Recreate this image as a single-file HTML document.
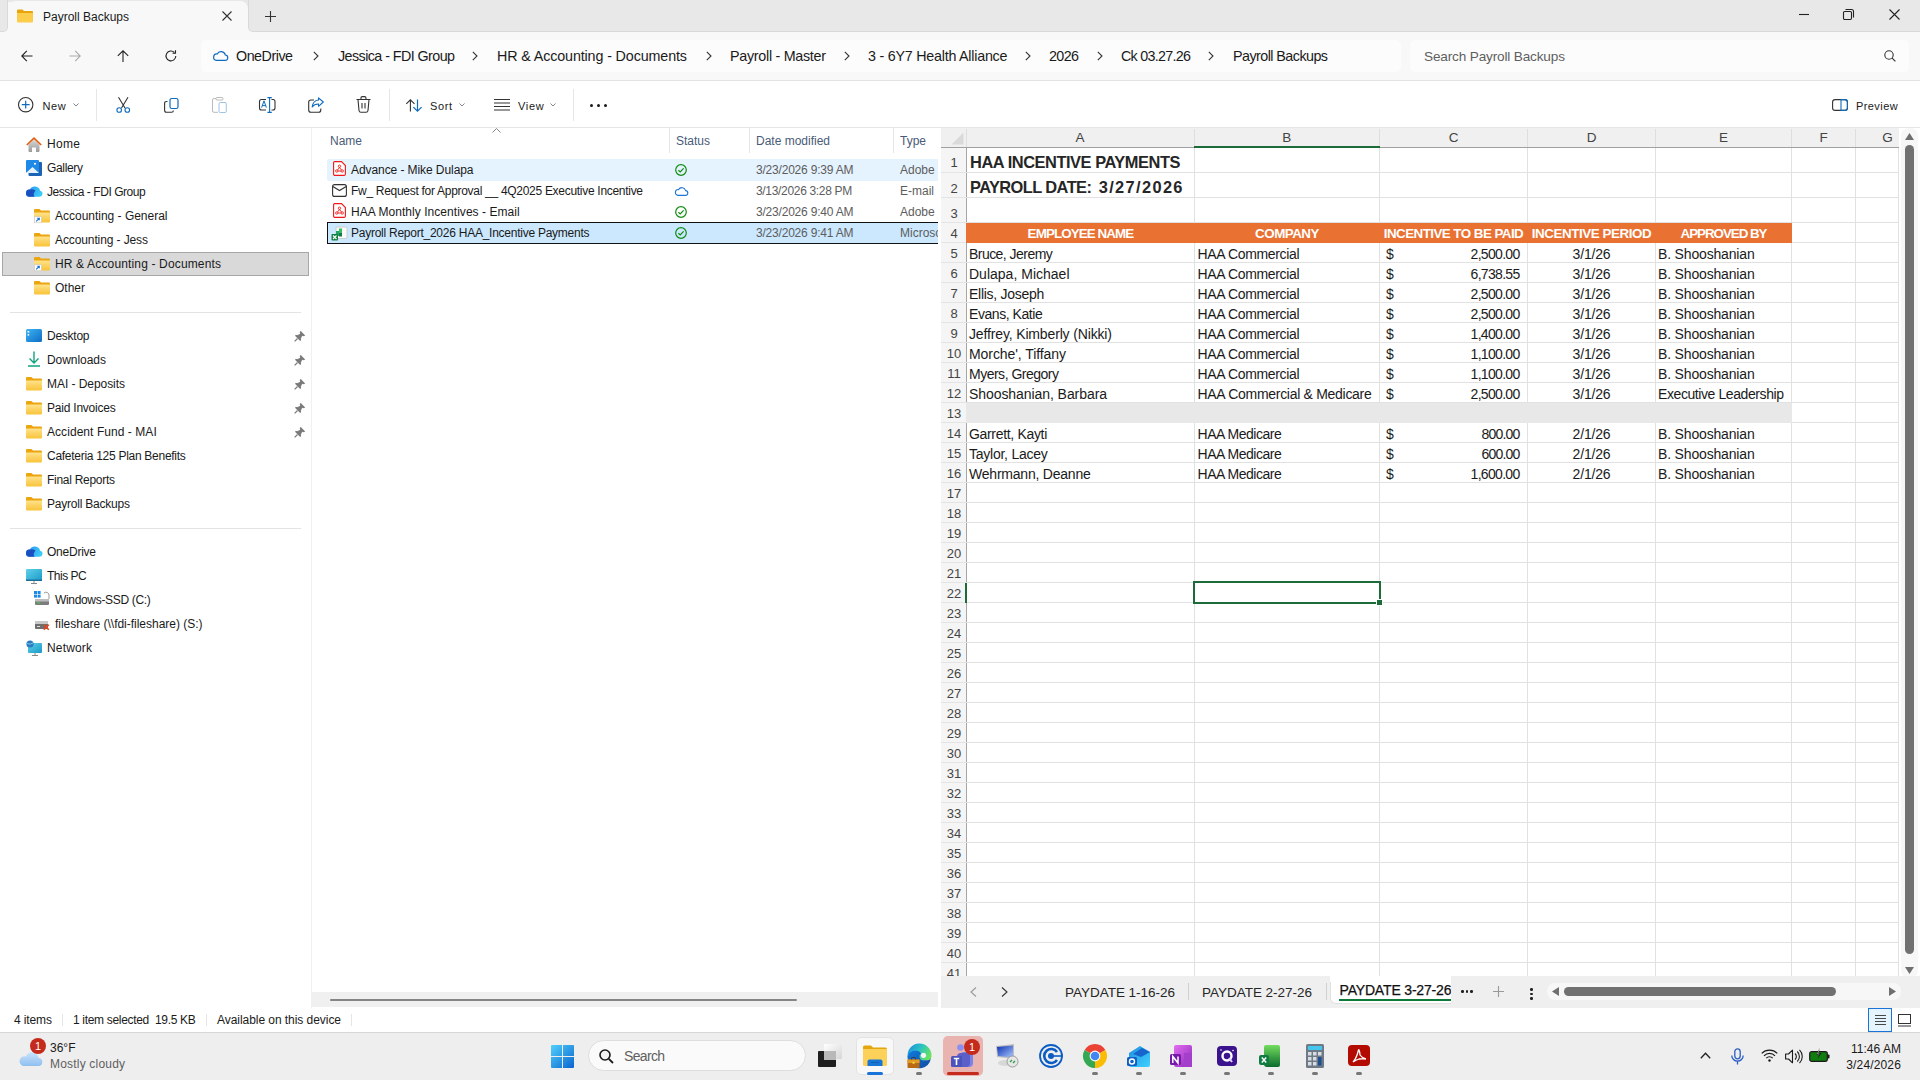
<!DOCTYPE html>
<html><head><meta charset="utf-8">
<style>
*{margin:0;padding:0;box-sizing:border-box}
html,body{width:1920px;height:1080px;overflow:hidden;background:#fff;font-family:"Liberation Sans",sans-serif;color:#1a1a1a}
.a{position:absolute}
.t{position:absolute;white-space:nowrap;line-height:20px;font-size:12px}
svg{position:absolute;overflow:visible}
</style></head><body>

<!-- TITLE BAR -->
<div class="a" style="left:0;top:0;width:1920px;height:80px;background:#f8f8f8"></div>
<div class="a" style="left:0;top:0;width:1920px;height:2px;background:#e8e8e8"></div>
<div class="a" style="left:0;top:0;width:8px;height:10px;background:#e8e8e8"></div>
<div class="a" style="left:240px;top:0;width:12px;height:10px;background:#e8e8e8"></div>
<div class="a" style="left:8px;top:1px;width:240px;height:30px;background:#f8f8f8;border-radius:8px 8px 0 0"></div>
<div class="a" style="left:-1px;top:-1px;width:9px;height:32.5px;background:#e8e8e8;border-radius:0 0 5px 0;border:1px solid #d9d9d9;border-top:none;border-left:none"></div>
<div class="a" style="left:248px;top:-1px;width:1673px;height:32.5px;background:#e8e8e8;border-radius:0 0 0 5px;border:1px solid #d9d9d9;border-top:none;border-right:none"></div>
<svg style="left:17px;top:9px" width="16" height="14" viewBox="0 0 16 14"><path d="M0 1.5Q0 0.5 1 0.5H5.5L7 2H15Q16 2 16 3V4H0Z" fill="#e8a40b"/><path d="M0 4H16V12.5Q16 13.5 15 13.5H1Q0 13.5 0 12.5Z" fill="#fbcd4b"/></svg>
<div class="t" style="left:43px;top:7px;font-size:12px;color:#1a1a1a">Payroll Backups</div>
<svg style="left:222px;top:11px" width="10" height="10" viewBox="0 0 10 10"><path d="M0.5 0.5L9.5 9.5M9.5 0.5L0.5 9.5" stroke="#333" stroke-width="1.1"/></svg>
<svg style="left:265px;top:11px" width="11" height="11" viewBox="0 0 11 11"><path d="M5.5 0V11M0 5.5H11" stroke="#333" stroke-width="1.1"/></svg>
<!-- window controls -->
<svg style="left:1799px;top:14px" width="10" height="2" viewBox="0 0 10 2"><path d="M0 0.5H10" stroke="#222" stroke-width="1.1"/></svg>
<svg style="left:1843px;top:9px" width="11" height="11" viewBox="0 0 11 11"><rect x="0.5" y="2.5" width="8" height="8" rx="1.2" fill="none" stroke="#222" stroke-width="1.1"/><path d="M2.5 0.5H8.5Q10.5 0.5 10.5 2.5V8.5" fill="none" stroke="#222" stroke-width="1.1"/></svg>
<svg style="left:1889px;top:9px" width="11" height="11" viewBox="0 0 11 11"><path d="M0.5 0.5L10.5 10.5M10.5 0.5L0.5 10.5" stroke="#222" stroke-width="1.1"/></svg>

<!-- ADDRESS ROW -->

<div class="a" style="left:0;top:80px;width:1920px;height:1px;background:#e3e3e3"></div>
<svg style="left:21px;top:50px" width="12" height="12" viewBox="0 0 12 12"><path d="M11.5 6H0.8M5.8 0.8L0.8 6L5.8 11.2" fill="none" stroke="#222" stroke-width="1.1"/></svg>
<svg style="left:69px;top:50px" width="12" height="12" viewBox="0 0 12 12"><path d="M0.5 6H11.2M6.2 0.8L11.2 6L6.2 11.2" fill="none" stroke="#aaa" stroke-width="1.1"/></svg>
<svg style="left:117px;top:50px" width="12" height="12" viewBox="0 0 12 12"><path d="M6 12V0.8M0.8 5.8L6 0.8L11.2 5.8" fill="none" stroke="#222" stroke-width="1.1"/></svg>
<svg style="left:165px;top:50px" width="12" height="12" viewBox="0 0 12 12"><path d="M10.8 6A4.9 4.9 0 1 1 9.4 2.5" fill="none" stroke="#222" stroke-width="1.1"/><path d="M10.5 0.3V3.3H7.5" fill="none" stroke="#222" stroke-width="1.1"/></svg>
<div class="a" style="left:201px;top:40px;width:1200px;height:32px;background:#fcfcfc;border-radius:5px"></div>
<div class="a" style="left:1410px;top:40px;width:499px;height:32px;background:#fcfcfc;border-radius:5px"></div>
<svg style="left:213px;top:50px" width="15" height="11" viewBox="0 0 15 11"><path d="M3.5 10.4H11.8A2.7 2.7 0 0 0 12.3 5A4.3 4.3 0 0 0 4.2 4A3.2 3.2 0 0 0 3.5 10.4Z" fill="none" stroke="#0f6cbd" stroke-width="1.2"/></svg>
<div class="t" style="left:236px;top:46.2px;font-size:14.3px;color:#1a1a1a;letter-spacing:-0.485px;">OneDrive</div>
<div class="t" style="left:338px;top:46.2px;font-size:14.3px;color:#1a1a1a;letter-spacing:-0.563px;">Jessica - FDI Group</div>
<div class="t" style="left:497px;top:46.2px;font-size:14.3px;color:#1a1a1a;letter-spacing:-0.12px;">HR &amp; Accounting - Documents</div>
<div class="t" style="left:730px;top:46.2px;font-size:14.3px;color:#1a1a1a;letter-spacing:-0.274px;">Payroll - Master</div>
<div class="t" style="left:868px;top:46.2px;font-size:14.3px;color:#1a1a1a;letter-spacing:-0.235px;">3 - 6Y7 Health Alliance</div>
<div class="t" style="left:1049px;top:46.2px;font-size:14.3px;color:#1a1a1a;letter-spacing:-0.603px;">2026</div>
<div class="t" style="left:1121px;top:46.2px;font-size:14.3px;color:#1a1a1a;letter-spacing:-0.711px;">Ck 03.27.26</div>
<div class="t" style="left:1233px;top:46.2px;font-size:14.3px;color:#1a1a1a;letter-spacing:-0.538px;">Payroll Backups</div>
<svg style="left:313px;top:51px" width="6" height="10" viewBox="0 0 6 10"><path d="M0.8 0.8L5 5L0.8 9.2" fill="none" stroke="#333" stroke-width="1.1"/></svg>
<svg style="left:472px;top:51px" width="6" height="10" viewBox="0 0 6 10"><path d="M0.8 0.8L5 5L0.8 9.2" fill="none" stroke="#333" stroke-width="1.1"/></svg>
<svg style="left:706px;top:51px" width="6" height="10" viewBox="0 0 6 10"><path d="M0.8 0.8L5 5L0.8 9.2" fill="none" stroke="#333" stroke-width="1.1"/></svg>
<svg style="left:844px;top:51px" width="6" height="10" viewBox="0 0 6 10"><path d="M0.8 0.8L5 5L0.8 9.2" fill="none" stroke="#333" stroke-width="1.1"/></svg>
<svg style="left:1025px;top:51px" width="6" height="10" viewBox="0 0 6 10"><path d="M0.8 0.8L5 5L0.8 9.2" fill="none" stroke="#333" stroke-width="1.1"/></svg>
<svg style="left:1097px;top:51px" width="6" height="10" viewBox="0 0 6 10"><path d="M0.8 0.8L5 5L0.8 9.2" fill="none" stroke="#333" stroke-width="1.1"/></svg>
<svg style="left:1208px;top:51px" width="6" height="10" viewBox="0 0 6 10"><path d="M0.8 0.8L5 5L0.8 9.2" fill="none" stroke="#333" stroke-width="1.1"/></svg>
<div class="t" style="left:1424px;top:46.5px;font-size:13.6px;color:#5f5f5f;letter-spacing:-0.161px;">Search Payroll Backups</div>
<svg style="left:1884px;top:50px" width="12" height="12" viewBox="0 0 12 12"><circle cx="5" cy="5" r="4.2" fill="none" stroke="#333" stroke-width="1.1"/><path d="M8.1 8.1L11.4 11.4" stroke="#333" stroke-width="1.2"/></svg>
<svg style="left:18px;top:97px" width="16" height="16" viewBox="0 0 16 16"><circle cx="7.7" cy="7.7" r="7.2" stroke="#333" stroke-width="1.1" fill="none"/><path d="M7.7 3.8V11.6M3.8 7.7H11.6" stroke="#0f6cbd" stroke-width="1.2"/></svg>
<div class="t" style="left:42.5px;top:95.6px;font-size:11px;color:#1a1a1a;letter-spacing:0.647px;">New</div>
<svg style="left:73px;top:103px" width="7" height="4" viewBox="0 0 7 4"><path d="M0.5 0.5L3 3L5.5 0.5" stroke="#777" stroke-width="0.9" fill="none"/></svg>
<div class="a" style="left:96px;top:89px;width:1px;height:32px;background:#e6e6e6"></div>
<svg style="left:116px;top:97px" width="15" height="16" viewBox="0 0 15 16"><path d="M2.5 0.3L9 11M12 0.3L5.5 11" stroke="#333" stroke-width="1.1" fill="none"/><circle cx="3.2" cy="13" r="2.3" stroke="#0f6cbd" stroke-width="1.1" fill="none"/><circle cx="11.3" cy="13" r="2.3" stroke="#0f6cbd" stroke-width="1.1" fill="none"/></svg>
<svg style="left:164px;top:98px" width="15" height="15" viewBox="0 0 15 15"><rect x="6" y="0.5" width="8" height="10" rx="1.8" stroke="#0f6cbd" stroke-width="1.2" fill="none"/><path d="M3.5 3.5H2.5Q0.6 3.5 0.6 5.5V12.3Q0.6 14.3 2.5 14.3H7.5Q9.4 14.3 9.4 12.5" stroke="#333" stroke-width="1.1" fill="none"/></svg>
<svg style="left:212px;top:97px" width="15" height="16" viewBox="0 0 15 16"><path d="M4 1.5H2Q0.5 1.5 0.5 3V14Q0.5 15.3 2 15.3H6" stroke="#bbb" stroke-width="1" fill="none"/><rect x="4" y="0.5" width="7" height="2.5" rx="1" stroke="#bbb" stroke-width="1" fill="none"/><rect x="7" y="5.5" width="7.3" height="10" rx="1.2" stroke="#9cc3e6" stroke-width="1" fill="none"/></svg>
<svg style="left:259px;top:97px" width="17" height="16" viewBox="0 0 17 16"><path d="M7 2.5H2.5Q0.5 2.5 0.5 4.5V11Q0.5 13 2.5 13H7M12.5 2.5H14Q16 2.5 16 4.5V11Q16 13 14 13H12.5" stroke="#333" stroke-width="1.1" fill="none"/><path d="M10.6 0.6V15.4M8.4 0.6H12.8M8.4 15.4H12.8" stroke="#0f6cbd" stroke-width="1.1" fill="none"/><path d="M2.6 10.6L5 3.8L7.4 10.6M3.4 8.6H6.6" stroke="#0f6cbd" stroke-width="1" fill="none"/></svg>
<svg style="left:308px;top:97px" width="16" height="16" viewBox="0 0 16 16"><path d="M6 3H3Q0.7 3 0.7 5.3V13Q0.7 15.3 3 15.3H10.5Q12.8 15.3 12.8 13V11.5" stroke="#333" stroke-width="1.1" fill="none"/><path d="M15.3 5L10.5 0.8V3Q5 3.5 4.2 10Q6.5 6.8 10.5 7V9.3Z" stroke="#0f6cbd" stroke-width="1.1" fill="none" stroke-linejoin="round"/></svg>
<svg style="left:356px;top:96px" width="15" height="17" viewBox="0 0 15 17"><path d="M0.5 3.5H14.5M5 3.5V2Q5 0.6 6.4 0.6H8.6Q10 0.6 10 2V3.5M2 3.5L3 14.5Q3.2 16.2 5 16.2H10Q11.8 16.2 12 14.5L13 3.5M6 7V12.5M9 7V12.5" stroke="#333" stroke-width="1.1" fill="none"/></svg>
<div class="a" style="left:389px;top:89px;width:1px;height:32px;background:#e6e6e6"></div>
<svg style="left:406px;top:98.5px" width="17" height="13" viewBox="0 0 17 13"><path d="M4.4 12.5V0.8M0.3 4.9L4.4 0.8L8.5 4.9" stroke="#333" stroke-width="1.1" fill="none"/><path d="M11.5 0.5V12.2M7.4 8.1L11.5 12.2L15.6 8.1" stroke="#0f6cbd" stroke-width="1.2" fill="none"/></svg>
<div class="t" style="left:430px;top:95.6px;font-size:11px;color:#1a1a1a;letter-spacing:0.609px;">Sort</div>
<svg style="left:459px;top:103px" width="7" height="4" viewBox="0 0 7 4"><path d="M0.5 0.5L3 3L5.5 0.5" stroke="#777" stroke-width="0.9" fill="none"/></svg>
<svg style="left:494px;top:99px" width="16" height="12" viewBox="0 0 16 12"><path d="M0 0.5H16M0 4H16M0 7.5H16M0 11H16" stroke="#333" stroke-width="1"/></svg>
<div class="t" style="left:518px;top:95.6px;font-size:11px;color:#1a1a1a;letter-spacing:0.702px;">View</div>
<svg style="left:550px;top:103px" width="7" height="4" viewBox="0 0 7 4"><path d="M0.5 0.5L3 3L5.5 0.5" stroke="#777" stroke-width="0.9" fill="none"/></svg>
<div class="a" style="left:573px;top:89px;width:1px;height:32px;background:#e6e6e6"></div>
<div class="a" style="left:590px;top:104px;width:3px;height:3px;border-radius:50%;background:#1a1a1a"></div>
<div class="a" style="left:597px;top:104px;width:3px;height:3px;border-radius:50%;background:#1a1a1a"></div>
<div class="a" style="left:604px;top:104px;width:3px;height:3px;border-radius:50%;background:#1a1a1a"></div>
<svg style="left:1832px;top:99px" width="16" height="12" viewBox="0 0 16 12"><rect x="0.6" y="0.6" width="14.8" height="10.8" rx="2.5" stroke="#333" stroke-width="1.1" fill="none"/><path d="M9 0.6H13Q15.4 0.6 15.4 3V9Q15.4 11.4 13 11.4H9Z" stroke="#0f6cbd" stroke-width="1.1" fill="none"/></svg>
<div class="t" style="left:1856px;top:95.6px;font-size:11px;color:#1a1a1a;letter-spacing:0.413px;">Preview</div>
<div class="a" style="left:0;top:127px;width:1920px;height:1px;background:#e5e5e5"></div>
<div class="a" style="left:311px;top:128px;width:1px;height:880px;background:#f0f0f0"></div>
<div class="a" style="left:2px;top:252px;width:307px;height:24px;background:#d9d9d9;border:1px solid #a6a6a6"></div>
<svg style="left:26px;top:137px" width="16" height="15" viewBox="0 0 16 15"><defs><linearGradient id="hg" x1="0" y1="0" x2="0" y2="1"><stop offset="0" stop-color="#d8d8d8"/><stop offset="1" stop-color="#9a9a9a"/></linearGradient></defs><path d="M2.5 7.5L8 2.5L13.5 7.5V14Q13.5 15 12.5 15H10V10.5H6V15H3.5Q2.5 15 2.5 14Z" fill="url(#hg)"/><path d="M0.8 8L8 1.2L15.2 8" fill="none" stroke="#e25c0f" stroke-width="1.6" stroke-linejoin="round"/></svg>
<div class="t" style="left:47px;top:134px;font-size:12px;color:#1a1a1a;letter-spacing:0.331px;">Home</div>
<svg style="left:26px;top:160px" width="16" height="16" viewBox="0 0 16 16"><rect x="2.5" y="2" width="13.5" height="14" rx="1" fill="#1c64b5"/><rect x="0" y="0" width="13" height="13" rx="1" fill="#1e8ae6"/><path d="M0 13L6.5 7L13 13Z" fill="#e6f2fc"/><circle cx="9" cy="3.7" r="1" fill="#fff"/></svg>
<div class="t" style="left:47px;top:158px;font-size:12px;color:#1a1a1a;letter-spacing:-0.335px;">Gallery</div>
<svg style="left:26px;top:185px" width="17" height="12" viewBox="0 0 17 12"><defs><linearGradient id="cg1" x1="0" y1="0" x2="1" y2="0.3"><stop offset="0" stop-color="#2a8ef0"/><stop offset="1" stop-color="#3ccaf7"/></linearGradient></defs><path d="M3.4 11.8H13.6A3.1 3.1 0 0 0 14.2 5.7A5.6 5.6 0 0 0 3.8 4.6A3.6 3.6 0 0 0 3.4 11.8Z" fill="url(#cg1)"/><path d="M3.4 11.8H8.5Q6.5 9 9.5 5.5Q6.5 3.5 3.8 4.6A3.6 3.6 0 0 0 3.4 11.8Z" fill="#1a4fc0"/></svg>
<div class="t" style="left:47px;top:182px;font-size:12px;color:#1a1a1a;letter-spacing:-0.441px;">Jessica - FDI Group</div>
<svg style="left:34px;top:209px" width="16" height="14" viewBox="0 0 16 14"><defs><linearGradient id="fg" x1="0" y1="0" x2="0" y2="1"><stop offset="0" stop-color="#ffe28a"/><stop offset="1" stop-color="#f8c33a"/></linearGradient></defs><path d="M0 1.2Q0 0 1.2 0H5.5L7 1.6H14.8Q16 1.6 16 2.8V4H0Z" fill="#eaa510"/><path d="M0 3.6H16V12.4Q16 13.5 14.8 13.5H1.2Q0 13.5 0 12.4Z" fill="url(#fg)"/><rect x="0.3" y="7.8" width="7" height="6" fill="#fff" stroke="#c8c8c8" stroke-width="0.6"/><path d="M2.2 12.3L5.2 9.3M3.2 9.2H5.3V11.3" stroke="#1a73d9" stroke-width="1.1" fill="none"/></svg>
<div class="t" style="left:55px;top:206px;font-size:12px;color:#1a1a1a;letter-spacing:-0.012px;">Accounting - General</div>
<svg style="left:34px;top:233px" width="16" height="14" viewBox="0 0 16 14"><defs><linearGradient id="fg" x1="0" y1="0" x2="0" y2="1"><stop offset="0" stop-color="#ffe28a"/><stop offset="1" stop-color="#f8c33a"/></linearGradient></defs><path d="M0 1.2Q0 0 1.2 0H5.5L7 1.6H14.8Q16 1.6 16 2.8V4H0Z" fill="#eaa510"/><path d="M0 3.6H16V12.4Q16 13.5 14.8 13.5H1.2Q0 13.5 0 12.4Z" fill="url(#fg)"/></svg>
<div class="t" style="left:55px;top:230px;font-size:12px;color:#1a1a1a;letter-spacing:-0.107px;">Accounting - Jess</div>
<svg style="left:34px;top:257px" width="16" height="14" viewBox="0 0 16 14"><defs><linearGradient id="fg" x1="0" y1="0" x2="0" y2="1"><stop offset="0" stop-color="#ffe28a"/><stop offset="1" stop-color="#f8c33a"/></linearGradient></defs><path d="M0 1.2Q0 0 1.2 0H5.5L7 1.6H14.8Q16 1.6 16 2.8V4H0Z" fill="#eaa510"/><path d="M0 3.6H16V12.4Q16 13.5 14.8 13.5H1.2Q0 13.5 0 12.4Z" fill="url(#fg)"/><rect x="0.3" y="7.8" width="7" height="6" fill="#fff" stroke="#c8c8c8" stroke-width="0.6"/><path d="M2.2 12.3L5.2 9.3M3.2 9.2H5.3V11.3" stroke="#1a73d9" stroke-width="1.1" fill="none"/></svg>
<div class="t" style="left:55px;top:254px;font-size:12px;color:#1a1a1a;letter-spacing:0.151px;">HR &amp; Accounting - Documents</div>
<svg style="left:34px;top:281px" width="16" height="14" viewBox="0 0 16 14"><defs><linearGradient id="fg" x1="0" y1="0" x2="0" y2="1"><stop offset="0" stop-color="#ffe28a"/><stop offset="1" stop-color="#f8c33a"/></linearGradient></defs><path d="M0 1.2Q0 0 1.2 0H5.5L7 1.6H14.8Q16 1.6 16 2.8V4H0Z" fill="#eaa510"/><path d="M0 3.6H16V12.4Q16 13.5 14.8 13.5H1.2Q0 13.5 0 12.4Z" fill="url(#fg)"/></svg>
<div class="t" style="left:55px;top:278px;font-size:12px;color:#1a1a1a;letter-spacing:-0.002px;">Other</div>
<div class="a" style="left:10px;top:312px;width:291px;height:1px;background:#e3e3e3"></div>
<svg style="left:26px;top:329px" width="16" height="13" viewBox="0 0 16 13"><defs><linearGradient id="dg" x1="0" y1="0" x2="1" y2="1"><stop offset="0" stop-color="#3db4f2"/><stop offset="1" stop-color="#0f6cc6"/></linearGradient></defs><rect x="0" y="0" width="16" height="13" rx="1.5" fill="url(#dg)"/><rect x="1.6" y="2" width="1.6" height="1.6" fill="#fff"/><rect x="1.6" y="5" width="1.6" height="1.6" fill="#fff"/></svg>
<div class="t" style="left:47px;top:326px;font-size:12px;color:#1a1a1a;letter-spacing:-0.253px;">Desktop</div>
<svg style="left:26px;top:351px" width="16" height="16" viewBox="0 0 16 16"><path d="M8 0.5V12M3.5 7.5L8 12L12.5 7.5M2 15H14" fill="none" stroke="#12a37f" stroke-width="1.4"/></svg>
<div class="t" style="left:47px;top:350px;font-size:12px;color:#1a1a1a;letter-spacing:-0.046px;">Downloads</div>
<svg style="left:26px;top:377px" width="16" height="14" viewBox="0 0 16 14"><defs><linearGradient id="fg" x1="0" y1="0" x2="0" y2="1"><stop offset="0" stop-color="#ffe28a"/><stop offset="1" stop-color="#f8c33a"/></linearGradient></defs><path d="M0 1.2Q0 0 1.2 0H5.5L7 1.6H14.8Q16 1.6 16 2.8V4H0Z" fill="#eaa510"/><path d="M0 3.6H16V12.4Q16 13.5 14.8 13.5H1.2Q0 13.5 0 12.4Z" fill="url(#fg)"/></svg>
<div class="t" style="left:47px;top:374px;font-size:12px;color:#1a1a1a;letter-spacing:-0.053px;">MAI - Deposits</div>
<svg style="left:26px;top:401px" width="16" height="14" viewBox="0 0 16 14"><defs><linearGradient id="fg" x1="0" y1="0" x2="0" y2="1"><stop offset="0" stop-color="#ffe28a"/><stop offset="1" stop-color="#f8c33a"/></linearGradient></defs><path d="M0 1.2Q0 0 1.2 0H5.5L7 1.6H14.8Q16 1.6 16 2.8V4H0Z" fill="#eaa510"/><path d="M0 3.6H16V12.4Q16 13.5 14.8 13.5H1.2Q0 13.5 0 12.4Z" fill="url(#fg)"/></svg>
<div class="t" style="left:47px;top:398px;font-size:12px;color:#1a1a1a;letter-spacing:-0.218px;">Paid Invoices</div>
<svg style="left:26px;top:425px" width="16" height="14" viewBox="0 0 16 14"><defs><linearGradient id="fg" x1="0" y1="0" x2="0" y2="1"><stop offset="0" stop-color="#ffe28a"/><stop offset="1" stop-color="#f8c33a"/></linearGradient></defs><path d="M0 1.2Q0 0 1.2 0H5.5L7 1.6H14.8Q16 1.6 16 2.8V4H0Z" fill="#eaa510"/><path d="M0 3.6H16V12.4Q16 13.5 14.8 13.5H1.2Q0 13.5 0 12.4Z" fill="url(#fg)"/></svg>
<div class="t" style="left:47px;top:422px;font-size:12px;color:#1a1a1a;letter-spacing:0.058px;">Accident Fund - MAI</div>
<svg style="left:26px;top:449px" width="16" height="14" viewBox="0 0 16 14"><defs><linearGradient id="fg" x1="0" y1="0" x2="0" y2="1"><stop offset="0" stop-color="#ffe28a"/><stop offset="1" stop-color="#f8c33a"/></linearGradient></defs><path d="M0 1.2Q0 0 1.2 0H5.5L7 1.6H14.8Q16 1.6 16 2.8V4H0Z" fill="#eaa510"/><path d="M0 3.6H16V12.4Q16 13.5 14.8 13.5H1.2Q0 13.5 0 12.4Z" fill="url(#fg)"/></svg>
<div class="t" style="left:47px;top:446px;font-size:12px;color:#1a1a1a;letter-spacing:-0.282px;">Cafeteria 125 Plan Benefits</div>
<svg style="left:26px;top:473px" width="16" height="14" viewBox="0 0 16 14"><defs><linearGradient id="fg" x1="0" y1="0" x2="0" y2="1"><stop offset="0" stop-color="#ffe28a"/><stop offset="1" stop-color="#f8c33a"/></linearGradient></defs><path d="M0 1.2Q0 0 1.2 0H5.5L7 1.6H14.8Q16 1.6 16 2.8V4H0Z" fill="#eaa510"/><path d="M0 3.6H16V12.4Q16 13.5 14.8 13.5H1.2Q0 13.5 0 12.4Z" fill="url(#fg)"/></svg>
<div class="t" style="left:47px;top:470px;font-size:12px;color:#1a1a1a;letter-spacing:-0.28px;">Final Reports</div>
<svg style="left:26px;top:497px" width="16" height="14" viewBox="0 0 16 14"><defs><linearGradient id="fg" x1="0" y1="0" x2="0" y2="1"><stop offset="0" stop-color="#ffe28a"/><stop offset="1" stop-color="#f8c33a"/></linearGradient></defs><path d="M0 1.2Q0 0 1.2 0H5.5L7 1.6H14.8Q16 1.6 16 2.8V4H0Z" fill="#eaa510"/><path d="M0 3.6H16V12.4Q16 13.5 14.8 13.5H1.2Q0 13.5 0 12.4Z" fill="url(#fg)"/></svg>
<div class="t" style="left:47px;top:494px;font-size:12px;color:#1a1a1a;letter-spacing:-0.217px;">Payroll Backups</div>
<svg style="left:294px;top:330px" width="12" height="12" viewBox="0 0 12 12"><path d="M6.5 0.8L11.2 5.5L9.8 6.2L8.2 5.8L6.8 8.8L7.2 10L6.2 11L1 5.8L2 4.8L3.2 5.2L6.2 3.8L5.8 2.2Z" fill="#7a7a7a"/><path d="M3.5 8.5L0.6 11.4" stroke="#7a7a7a" stroke-width="1.2"/></svg>
<svg style="left:294px;top:354px" width="12" height="12" viewBox="0 0 12 12"><path d="M6.5 0.8L11.2 5.5L9.8 6.2L8.2 5.8L6.8 8.8L7.2 10L6.2 11L1 5.8L2 4.8L3.2 5.2L6.2 3.8L5.8 2.2Z" fill="#7a7a7a"/><path d="M3.5 8.5L0.6 11.4" stroke="#7a7a7a" stroke-width="1.2"/></svg>
<svg style="left:294px;top:378px" width="12" height="12" viewBox="0 0 12 12"><path d="M6.5 0.8L11.2 5.5L9.8 6.2L8.2 5.8L6.8 8.8L7.2 10L6.2 11L1 5.8L2 4.8L3.2 5.2L6.2 3.8L5.8 2.2Z" fill="#7a7a7a"/><path d="M3.5 8.5L0.6 11.4" stroke="#7a7a7a" stroke-width="1.2"/></svg>
<svg style="left:294px;top:402px" width="12" height="12" viewBox="0 0 12 12"><path d="M6.5 0.8L11.2 5.5L9.8 6.2L8.2 5.8L6.8 8.8L7.2 10L6.2 11L1 5.8L2 4.8L3.2 5.2L6.2 3.8L5.8 2.2Z" fill="#7a7a7a"/><path d="M3.5 8.5L0.6 11.4" stroke="#7a7a7a" stroke-width="1.2"/></svg>
<svg style="left:294px;top:426px" width="12" height="12" viewBox="0 0 12 12"><path d="M6.5 0.8L11.2 5.5L9.8 6.2L8.2 5.8L6.8 8.8L7.2 10L6.2 11L1 5.8L2 4.8L3.2 5.2L6.2 3.8L5.8 2.2Z" fill="#7a7a7a"/><path d="M3.5 8.5L0.6 11.4" stroke="#7a7a7a" stroke-width="1.2"/></svg>
<div class="a" style="left:10px;top:528px;width:291px;height:1px;background:#e3e3e3"></div>
<svg style="left:26px;top:545px" width="17" height="12" viewBox="0 0 17 12"><defs><linearGradient id="cg2" x1="0" y1="0" x2="1" y2="0.3"><stop offset="0" stop-color="#2a8ef0"/><stop offset="1" stop-color="#3ccaf7"/></linearGradient></defs><path d="M3.4 11.8H13.6A3.1 3.1 0 0 0 14.2 5.7A5.6 5.6 0 0 0 3.8 4.6A3.6 3.6 0 0 0 3.4 11.8Z" fill="url(#cg2)"/><path d="M3.4 11.8H8.5Q6.5 9 9.5 5.5Q6.5 3.5 3.8 4.6A3.6 3.6 0 0 0 3.4 11.8Z" fill="#1a4fc0"/></svg>
<div class="t" style="left:47px;top:542px;font-size:12px;color:#1a1a1a;letter-spacing:-0.24px;">OneDrive</div>
<svg style="left:26px;top:569px" width="16" height="16" viewBox="0 0 16 16"><defs><linearGradient id="pg" x1="0" y1="0" x2="1" y2="1"><stop offset="0" stop-color="#5fd0ea"/><stop offset="1" stop-color="#1a9ac7"/></linearGradient></defs><rect x="0" y="0" width="16" height="12" rx="1" fill="url(#pg)"/><rect x="0" y="10.5" width="16" height="1.5" fill="#1b6f9a"/><path d="M8 12V14.5M5 14.5H11" stroke="#888" stroke-width="1"/></svg>
<div class="t" style="left:47px;top:566px;font-size:12px;color:#1a1a1a;letter-spacing:-0.487px;">This PC</div>
<svg style="left:34px;top:591px" width="16" height="15" viewBox="0 0 16 15"><rect x="0" y="0" width="3" height="3" fill="#1e88e5"/><rect x="3.6" y="0" width="3" height="3" fill="#1e88e5"/><rect x="0" y="3.6" width="3" height="3" fill="#1e88e5"/><rect x="3.6" y="3.6" width="3" height="3" fill="#1e88e5"/><path d="M1 8H15V13Q15 14 14 14H2Q1 14 1 13Z" fill="#7d7d7d"/><rect x="1" y="8" width="14" height="2.5" fill="#bcbcbc"/><rect x="3" y="11.3" width="3" height="1" fill="#39d13e"/><path d="M10 2A3 3 0 0 1 15 4V8" fill="none" stroke="#999" stroke-width="1"/></svg>
<div class="t" style="left:55px;top:590px;font-size:12px;color:#1a1a1a;letter-spacing:-0.328px;">Windows-SSD (C:)</div>
<svg style="left:34px;top:617px" width="16" height="14" viewBox="0 0 16 14"><path d="M1 5H14V11Q14 12 13 12H2Q1 12 1 11Z" fill="#6e6e6e"/><rect x="1" y="4" width="13" height="3" fill="#c9c9c9"/><rect x="3" y="9" width="3" height="1" fill="#ddd"/><path d="M9.8 7.8L14.8 12.8M14.8 7.8L9.8 12.8" stroke="#e8431c" stroke-width="1.6"/></svg>
<div class="t" style="left:55px;top:614px;font-size:12px;color:#1a1a1a;letter-spacing:-0.017px;">fileshare (\\fdi-fileshare) (S:)</div>
<svg style="left:26px;top:640px" width="16" height="16" viewBox="0 0 16 16"><defs><linearGradient id="ng" x1="0" y1="0" x2="1" y2="1"><stop offset="0" stop-color="#5fd0ea"/><stop offset="1" stop-color="#1a9ac7"/></linearGradient></defs><rect x="2" y="3" width="14" height="10" rx="1" fill="url(#ng)"/><path d="M9 13V15.5M6 15.5H12" stroke="#888" stroke-width="1"/><circle cx="4" cy="4" r="3.6" fill="#2b7bc0"/><path d="M1 3.5Q4 5 7 3" stroke="#8ed4f2" stroke-width="0.8" fill="none"/></svg>
<div class="t" style="left:47px;top:638px;font-size:12px;color:#1a1a1a;letter-spacing:0.165px;">Network</div>
<div class="t" style="left:330px;top:131px;font-size:12px;color:#4a5b78;">Name</div>
<svg style="left:492px;top:128px" width="9" height="5" viewBox="0 0 9 5"><path d="M0.5 4.5L4.5 0.5L8.5 4.5" stroke="#777" stroke-width="0.9" fill="none"/></svg>
<div class="t" style="left:676px;top:131px;font-size:12px;color:#4a5b78;">Status</div>
<div class="t" style="left:756px;top:131px;font-size:12px;color:#4a5b78;">Date modified</div>
<div class="t" style="left:900px;top:131px;font-size:12px;color:#4a5b78;">Type</div>
<div class="a" style="left:669px;top:128px;width:1px;height:25px;background:#e5e5e5"></div>
<div class="a" style="left:749px;top:128px;width:1px;height:25px;background:#e5e5e5"></div>
<div class="a" style="left:893px;top:128px;width:1px;height:25px;background:#e5e5e5"></div>
<div class="a" style="left:327px;top:159px;width:611px;height:22px;background:#e5f3ff;border-radius:2px 0 0 2px"></div>
<div class="a" style="left:327px;top:222px;width:611px;height:22px;background:#cce8ff;border:1px solid #111;border-right:none"></div>
<svg style="left:333px;top:161px" width="13" height="15" viewBox="0 0 13 15"><path d="M1.5 0.6H8.5L12.4 4.5V13Q12.4 14.4 11 14.4H2Q0.6 14.4 0.6 13V2Q0.6 0.6 1.5 0.6Z" fill="#fff" stroke="#f01818" stroke-width="1.1"/><circle cx="6.5" cy="5.3" r="1.2" fill="none" stroke="#f01818" stroke-width="0.9"/><circle cx="3.8" cy="10" r="1.2" fill="none" stroke="#f01818" stroke-width="0.9"/><circle cx="9.2" cy="10" r="1.2" fill="none" stroke="#f01818" stroke-width="0.9"/><path d="M6.5 6.5L4.5 9M6.5 6.5L8.5 9M5 10H8" stroke="#f01818" stroke-width="0.9"/></svg>
<svg style="left:333px;top:203px" width="13" height="15" viewBox="0 0 13 15"><path d="M1.5 0.6H8.5L12.4 4.5V13Q12.4 14.4 11 14.4H2Q0.6 14.4 0.6 13V2Q0.6 0.6 1.5 0.6Z" fill="#fff" stroke="#f01818" stroke-width="1.1"/><circle cx="6.5" cy="5.3" r="1.2" fill="none" stroke="#f01818" stroke-width="0.9"/><circle cx="3.8" cy="10" r="1.2" fill="none" stroke="#f01818" stroke-width="0.9"/><circle cx="9.2" cy="10" r="1.2" fill="none" stroke="#f01818" stroke-width="0.9"/><path d="M6.5 6.5L4.5 9M6.5 6.5L8.5 9M5 10H8" stroke="#f01818" stroke-width="0.9"/></svg>
<svg style="left:332px;top:184px" width="15" height="13" viewBox="0 0 15 13"><rect x="0.6" y="0.6" width="13.8" height="11.8" rx="2" fill="#fff" stroke="#333" stroke-width="1.1"/><path d="M0.8 2.5L7.5 6.5L14.2 2.5" fill="none" stroke="#333" stroke-width="1.1"/></svg>
<svg style="left:331px;top:226px" width="17" height="15" viewBox="0 0 17 15"><path d="M5 1H14.5Q16 1 16 2.5V11Q16 12.5 14.5 12.5H5Z" fill="#fbfbfb" stroke="#c4c4c4" stroke-width="0.8"/><rect x="8" y="2.5" width="3" height="4" fill="#36c25a"/><rect x="8" y="6.5" width="3" height="4" fill="#107c41"/><rect x="5" y="5" width="3" height="5" fill="#21a366"/><rect x="0.5" y="8" width="6.5" height="6.5" rx="0.8" fill="#107c41"/><path d="M2 9.5L5.5 13M5.5 9.5L2 13" stroke="#fff" stroke-width="1.1"/></svg>
<div class="t" style="left:351px;top:160px;font-size:12px;color:#1a1a1a;letter-spacing:-0.078px;">Advance - Mike Dulapa</div>
<div class="t" style="left:756px;top:160px;font-size:12px;color:#5d5d5d;letter-spacing:-0.202px;">3/23/2026 9:39 AM</div>
<div class="t" style="left:351px;top:181px;font-size:12px;color:#1a1a1a;letter-spacing:-0.292px;">Fw_ Request for Approval __ 4Q2025 Executive Incentive</div>
<div class="t" style="left:756px;top:181px;font-size:12px;color:#5d5d5d;letter-spacing:-0.322px;">3/13/2026 3:28 PM</div>
<div class="t" style="left:351px;top:202px;font-size:12px;color:#1a1a1a;letter-spacing:0.042px;">HAA Monthly Incentives - Email</div>
<div class="t" style="left:756px;top:202px;font-size:12px;color:#5d5d5d;letter-spacing:-0.202px;">3/23/2026 9:40 AM</div>
<div class="t" style="left:351px;top:223px;font-size:12px;color:#1a1a1a;letter-spacing:-0.251px;">Payroll Report_2026 HAA_Incentive Payments</div>
<div class="t" style="left:756px;top:223px;font-size:12px;color:#5d5d5d;letter-spacing:-0.202px;">3/23/2026 9:41 AM</div>
<svg style="left:675px;top:164px" width="12" height="12" viewBox="0 0 12 12"><circle cx="6" cy="6" r="5.3" fill="none" stroke="#108b10" stroke-width="1.2"/><path d="M3.4 6.2L5.2 7.9L8.6 4.3" fill="none" stroke="#108b10" stroke-width="1.2"/></svg>
<svg style="left:675px;top:206px" width="12" height="12" viewBox="0 0 12 12"><circle cx="6" cy="6" r="5.3" fill="none" stroke="#108b10" stroke-width="1.2"/><path d="M3.4 6.2L5.2 7.9L8.6 4.3" fill="none" stroke="#108b10" stroke-width="1.2"/></svg>
<svg style="left:675px;top:227px" width="12" height="12" viewBox="0 0 12 12"><circle cx="6" cy="6" r="5.3" fill="none" stroke="#108b10" stroke-width="1.2"/><path d="M3.4 6.2L5.2 7.9L8.6 4.3" fill="none" stroke="#108b10" stroke-width="1.2"/></svg>
<svg style="left:675px;top:186px" width="13" height="10" viewBox="0 0 13 10"><path d="M3 9.4H10.2A2.4 2.4 0 0 0 10.6 4.6A3.8 3.8 0 0 0 3.6 3.6A2.9 2.9 0 0 0 3 9.4Z" fill="none" stroke="#1f74d4" stroke-width="1.1"/></svg>
<div class="a" style="left:893px;top:159px;width:45px;height:90px;overflow:hidden">
<div class="t" style="left:7px;top:1px;font-size:12px;color:#5d5d5d">Adobe</div>
<div class="t" style="left:7px;top:22px;font-size:12px;color:#5d5d5d">E-mail</div>
<div class="t" style="left:7px;top:43px;font-size:12px;color:#5d5d5d">Adobe</div>
<div class="t" style="left:7px;top:64px;font-size:12px;color:#5d5d5d">Microsoft Excel</div>
</div>
<div class="a" style="left:312px;top:992px;width:626px;height:15px;background:#f0f0f0"></div>
<div class="a" style="left:330px;top:999px;width:467px;height:2px;background:#858585;border-radius:1px"></div>
<div class="a" style="left:938px;top:128px;width:982px;height:880px;background:#fff"></div>
<div class="a" style="left:941px;top:128px;width:958px;height:19px;background:#f0f0f0"></div>
<div class="a" style="left:941px;top:147px;width:25px;height:829px;background:#f5f5f5"></div>
<svg style="left:951px;top:132px" width="13" height="13" viewBox="0 0 13 13"><path d="M12.5 0.5V12.5H0.5Z" fill="#dadada"/></svg>
<div class="a" style="left:965.5px;top:129px;width:1px;height:18px;background:#dedede"></div>
<div class="a" style="left:1193.5px;top:129px;width:1px;height:18px;background:#dedede"></div>
<div class="a" style="left:1379.0px;top:129px;width:1px;height:18px;background:#dedede"></div>
<div class="a" style="left:1527.0px;top:129px;width:1px;height:18px;background:#dedede"></div>
<div class="a" style="left:1655.0px;top:129px;width:1px;height:18px;background:#dedede"></div>
<div class="a" style="left:1791.0px;top:129px;width:1px;height:18px;background:#dedede"></div>
<div class="a" style="left:1855.0px;top:129px;width:1px;height:18px;background:#dedede"></div>
<div class="t" style="left:780.0px;width:600px;text-align:center;top:127.80000000000001px;font-size:13.5px;color:#444;">A</div>
<div class="t" style="left:986.75px;width:600px;text-align:center;top:127.80000000000001px;font-size:13.5px;color:#444;">B</div>
<div class="t" style="left:1153.5px;width:600px;text-align:center;top:127.80000000000001px;font-size:13.5px;color:#444;">C</div>
<div class="t" style="left:1291.5px;width:600px;text-align:center;top:127.80000000000001px;font-size:13.5px;color:#444;">D</div>
<div class="t" style="left:1423.5px;width:600px;text-align:center;top:127.80000000000001px;font-size:13.5px;color:#444;">E</div>
<div class="t" style="left:1523.5px;width:600px;text-align:center;top:127.80000000000001px;font-size:13.5px;color:#444;">F</div>
<div class="t" style="left:1587.5px;width:600px;text-align:center;top:127.80000000000001px;font-size:13.5px;color:#444;">G</div>
<div class="a" style="left:941px;top:146.5px;width:958px;height:1.5px;background:#a0a0a0"></div>
<div class="a" style="left:1194px;top:146px;width:186px;height:2px;background:#1e6b3a"></div>
<div class="a" style="left:965.5px;top:147px;width:1.2px;height:829px;background:#a6a6a6"></div>
<div class="a" style="left:966px;top:172.0px;width:933px;height:1px;background:#e1e1e1"></div>
<div class="a" style="left:941px;top:172.0px;width:25px;height:1px;background:#e4e4e4"></div>
<div class="a" style="left:966px;top:197.0px;width:933px;height:1px;background:#e1e1e1"></div>
<div class="a" style="left:941px;top:197.0px;width:25px;height:1px;background:#e4e4e4"></div>
<div class="a" style="left:966px;top:222.0px;width:933px;height:1px;background:#e1e1e1"></div>
<div class="a" style="left:941px;top:222.0px;width:25px;height:1px;background:#e4e4e4"></div>
<div class="a" style="left:966px;top:242.0px;width:933px;height:1px;background:#e1e1e1"></div>
<div class="a" style="left:941px;top:242.0px;width:25px;height:1px;background:#e4e4e4"></div>
<div class="a" style="left:966px;top:262.0px;width:933px;height:1px;background:#e1e1e1"></div>
<div class="a" style="left:941px;top:262.0px;width:25px;height:1px;background:#e4e4e4"></div>
<div class="a" style="left:966px;top:282.0px;width:933px;height:1px;background:#e1e1e1"></div>
<div class="a" style="left:941px;top:282.0px;width:25px;height:1px;background:#e4e4e4"></div>
<div class="a" style="left:966px;top:302.0px;width:933px;height:1px;background:#e1e1e1"></div>
<div class="a" style="left:941px;top:302.0px;width:25px;height:1px;background:#e4e4e4"></div>
<div class="a" style="left:966px;top:322.0px;width:933px;height:1px;background:#e1e1e1"></div>
<div class="a" style="left:941px;top:322.0px;width:25px;height:1px;background:#e4e4e4"></div>
<div class="a" style="left:966px;top:342.0px;width:933px;height:1px;background:#e1e1e1"></div>
<div class="a" style="left:941px;top:342.0px;width:25px;height:1px;background:#e4e4e4"></div>
<div class="a" style="left:966px;top:362.0px;width:933px;height:1px;background:#e1e1e1"></div>
<div class="a" style="left:941px;top:362.0px;width:25px;height:1px;background:#e4e4e4"></div>
<div class="a" style="left:966px;top:382.0px;width:933px;height:1px;background:#e1e1e1"></div>
<div class="a" style="left:941px;top:382.0px;width:25px;height:1px;background:#e4e4e4"></div>
<div class="a" style="left:966px;top:402.0px;width:933px;height:1px;background:#e1e1e1"></div>
<div class="a" style="left:941px;top:402.0px;width:25px;height:1px;background:#e4e4e4"></div>
<div class="a" style="left:966px;top:422.0px;width:933px;height:1px;background:#e1e1e1"></div>
<div class="a" style="left:941px;top:422.0px;width:25px;height:1px;background:#e4e4e4"></div>
<div class="a" style="left:966px;top:442.0px;width:933px;height:1px;background:#e1e1e1"></div>
<div class="a" style="left:941px;top:442.0px;width:25px;height:1px;background:#e4e4e4"></div>
<div class="a" style="left:966px;top:462.0px;width:933px;height:1px;background:#e1e1e1"></div>
<div class="a" style="left:941px;top:462.0px;width:25px;height:1px;background:#e4e4e4"></div>
<div class="a" style="left:966px;top:482.0px;width:933px;height:1px;background:#e1e1e1"></div>
<div class="a" style="left:941px;top:482.0px;width:25px;height:1px;background:#e4e4e4"></div>
<div class="a" style="left:966px;top:502.0px;width:933px;height:1px;background:#e1e1e1"></div>
<div class="a" style="left:941px;top:502.0px;width:25px;height:1px;background:#e4e4e4"></div>
<div class="a" style="left:966px;top:522.0px;width:933px;height:1px;background:#e1e1e1"></div>
<div class="a" style="left:941px;top:522.0px;width:25px;height:1px;background:#e4e4e4"></div>
<div class="a" style="left:966px;top:542.0px;width:933px;height:1px;background:#e1e1e1"></div>
<div class="a" style="left:941px;top:542.0px;width:25px;height:1px;background:#e4e4e4"></div>
<div class="a" style="left:966px;top:562.0px;width:933px;height:1px;background:#e1e1e1"></div>
<div class="a" style="left:941px;top:562.0px;width:25px;height:1px;background:#e4e4e4"></div>
<div class="a" style="left:966px;top:582.0px;width:933px;height:1px;background:#e1e1e1"></div>
<div class="a" style="left:941px;top:582.0px;width:25px;height:1px;background:#e4e4e4"></div>
<div class="a" style="left:966px;top:602.0px;width:933px;height:1px;background:#e1e1e1"></div>
<div class="a" style="left:941px;top:602.0px;width:25px;height:1px;background:#e4e4e4"></div>
<div class="a" style="left:966px;top:622.0px;width:933px;height:1px;background:#e1e1e1"></div>
<div class="a" style="left:941px;top:622.0px;width:25px;height:1px;background:#e4e4e4"></div>
<div class="a" style="left:966px;top:642.0px;width:933px;height:1px;background:#e1e1e1"></div>
<div class="a" style="left:941px;top:642.0px;width:25px;height:1px;background:#e4e4e4"></div>
<div class="a" style="left:966px;top:662.0px;width:933px;height:1px;background:#e1e1e1"></div>
<div class="a" style="left:941px;top:662.0px;width:25px;height:1px;background:#e4e4e4"></div>
<div class="a" style="left:966px;top:682.0px;width:933px;height:1px;background:#e1e1e1"></div>
<div class="a" style="left:941px;top:682.0px;width:25px;height:1px;background:#e4e4e4"></div>
<div class="a" style="left:966px;top:702.0px;width:933px;height:1px;background:#e1e1e1"></div>
<div class="a" style="left:941px;top:702.0px;width:25px;height:1px;background:#e4e4e4"></div>
<div class="a" style="left:966px;top:722.0px;width:933px;height:1px;background:#e1e1e1"></div>
<div class="a" style="left:941px;top:722.0px;width:25px;height:1px;background:#e4e4e4"></div>
<div class="a" style="left:966px;top:742.0px;width:933px;height:1px;background:#e1e1e1"></div>
<div class="a" style="left:941px;top:742.0px;width:25px;height:1px;background:#e4e4e4"></div>
<div class="a" style="left:966px;top:762.0px;width:933px;height:1px;background:#e1e1e1"></div>
<div class="a" style="left:941px;top:762.0px;width:25px;height:1px;background:#e4e4e4"></div>
<div class="a" style="left:966px;top:782.0px;width:933px;height:1px;background:#e1e1e1"></div>
<div class="a" style="left:941px;top:782.0px;width:25px;height:1px;background:#e4e4e4"></div>
<div class="a" style="left:966px;top:802.0px;width:933px;height:1px;background:#e1e1e1"></div>
<div class="a" style="left:941px;top:802.0px;width:25px;height:1px;background:#e4e4e4"></div>
<div class="a" style="left:966px;top:822.0px;width:933px;height:1px;background:#e1e1e1"></div>
<div class="a" style="left:941px;top:822.0px;width:25px;height:1px;background:#e4e4e4"></div>
<div class="a" style="left:966px;top:842.0px;width:933px;height:1px;background:#e1e1e1"></div>
<div class="a" style="left:941px;top:842.0px;width:25px;height:1px;background:#e4e4e4"></div>
<div class="a" style="left:966px;top:862.0px;width:933px;height:1px;background:#e1e1e1"></div>
<div class="a" style="left:941px;top:862.0px;width:25px;height:1px;background:#e4e4e4"></div>
<div class="a" style="left:966px;top:882.0px;width:933px;height:1px;background:#e1e1e1"></div>
<div class="a" style="left:941px;top:882.0px;width:25px;height:1px;background:#e4e4e4"></div>
<div class="a" style="left:966px;top:902.0px;width:933px;height:1px;background:#e1e1e1"></div>
<div class="a" style="left:941px;top:902.0px;width:25px;height:1px;background:#e4e4e4"></div>
<div class="a" style="left:966px;top:922.0px;width:933px;height:1px;background:#e1e1e1"></div>
<div class="a" style="left:941px;top:922.0px;width:25px;height:1px;background:#e4e4e4"></div>
<div class="a" style="left:966px;top:942.0px;width:933px;height:1px;background:#e1e1e1"></div>
<div class="a" style="left:941px;top:942.0px;width:25px;height:1px;background:#e4e4e4"></div>
<div class="a" style="left:966px;top:962.0px;width:933px;height:1px;background:#e1e1e1"></div>
<div class="a" style="left:941px;top:962.0px;width:25px;height:1px;background:#e4e4e4"></div>
<div class="a" style="left:966px;top:982.0px;width:933px;height:1px;background:#e1e1e1"></div>
<div class="a" style="left:941px;top:982.0px;width:25px;height:1px;background:#e4e4e4"></div>
<div class="a" style="left:1193.5px;top:148px;width:1px;height:828px;background:#e1e1e1"></div>
<div class="a" style="left:1379.0px;top:148px;width:1px;height:828px;background:#e1e1e1"></div>
<div class="a" style="left:1527.0px;top:148px;width:1px;height:828px;background:#e1e1e1"></div>
<div class="a" style="left:1655.0px;top:148px;width:1px;height:828px;background:#e1e1e1"></div>
<div class="a" style="left:1791.0px;top:148px;width:1px;height:828px;background:#e1e1e1"></div>
<div class="a" style="left:1855.0px;top:148px;width:1px;height:828px;background:#e1e1e1"></div>
<div class="a" style="left:1898.0px;top:148px;width:1px;height:828px;background:#e1e1e1"></div>
<div class="a" style="left:966px;top:222.5px;width:825.5px;height:20px;background:#e97132"></div>
<div class="a" style="left:966px;top:402.5px;width:825.5px;height:20px;background:#e8e8e8"></div>
<div class="t" style="left:654px;width:600px;text-align:center;top:153.25px;font-size:13px;color:#444;">1</div>
<div class="t" style="left:654px;width:600px;text-align:center;top:178.5px;font-size:13px;color:#444;">2</div>
<div class="t" style="left:654px;width:600px;text-align:center;top:203.5px;font-size:13px;color:#444;">3</div>
<div class="t" style="left:654px;width:600px;text-align:center;top:224.0px;font-size:13px;color:#444;">4</div>
<div class="t" style="left:654px;width:600px;text-align:center;top:244.0px;font-size:13px;color:#444;">5</div>
<div class="t" style="left:654px;width:600px;text-align:center;top:264.0px;font-size:13px;color:#444;">6</div>
<div class="t" style="left:654px;width:600px;text-align:center;top:284.0px;font-size:13px;color:#444;">7</div>
<div class="t" style="left:654px;width:600px;text-align:center;top:304.0px;font-size:13px;color:#444;">8</div>
<div class="t" style="left:654px;width:600px;text-align:center;top:324.0px;font-size:13px;color:#444;">9</div>
<div class="t" style="left:654px;width:600px;text-align:center;top:344.0px;font-size:13px;color:#444;">10</div>
<div class="t" style="left:654px;width:600px;text-align:center;top:364.0px;font-size:13px;color:#444;">11</div>
<div class="t" style="left:654px;width:600px;text-align:center;top:384.0px;font-size:13px;color:#444;">12</div>
<div class="t" style="left:654px;width:600px;text-align:center;top:404.0px;font-size:13px;color:#444;">13</div>
<div class="t" style="left:654px;width:600px;text-align:center;top:424.0px;font-size:13px;color:#444;">14</div>
<div class="t" style="left:654px;width:600px;text-align:center;top:444.0px;font-size:13px;color:#444;">15</div>
<div class="t" style="left:654px;width:600px;text-align:center;top:464.0px;font-size:13px;color:#444;">16</div>
<div class="t" style="left:654px;width:600px;text-align:center;top:484.0px;font-size:13px;color:#444;">17</div>
<div class="t" style="left:654px;width:600px;text-align:center;top:504.0px;font-size:13px;color:#444;">18</div>
<div class="t" style="left:654px;width:600px;text-align:center;top:524.0px;font-size:13px;color:#444;">19</div>
<div class="t" style="left:654px;width:600px;text-align:center;top:544.0px;font-size:13px;color:#444;">20</div>
<div class="t" style="left:654px;width:600px;text-align:center;top:564.0px;font-size:13px;color:#444;">21</div>
<div class="t" style="left:654px;width:600px;text-align:center;top:584.0px;font-size:13px;color:#444;">22</div>
<div class="t" style="left:654px;width:600px;text-align:center;top:604.0px;font-size:13px;color:#444;">23</div>
<div class="t" style="left:654px;width:600px;text-align:center;top:624.0px;font-size:13px;color:#444;">24</div>
<div class="t" style="left:654px;width:600px;text-align:center;top:644.0px;font-size:13px;color:#444;">25</div>
<div class="t" style="left:654px;width:600px;text-align:center;top:664.0px;font-size:13px;color:#444;">26</div>
<div class="t" style="left:654px;width:600px;text-align:center;top:684.0px;font-size:13px;color:#444;">27</div>
<div class="t" style="left:654px;width:600px;text-align:center;top:704.0px;font-size:13px;color:#444;">28</div>
<div class="t" style="left:654px;width:600px;text-align:center;top:724.0px;font-size:13px;color:#444;">29</div>
<div class="t" style="left:654px;width:600px;text-align:center;top:744.0px;font-size:13px;color:#444;">30</div>
<div class="t" style="left:654px;width:600px;text-align:center;top:764.0px;font-size:13px;color:#444;">31</div>
<div class="t" style="left:654px;width:600px;text-align:center;top:784.0px;font-size:13px;color:#444;">32</div>
<div class="t" style="left:654px;width:600px;text-align:center;top:804.0px;font-size:13px;color:#444;">33</div>
<div class="t" style="left:654px;width:600px;text-align:center;top:824.0px;font-size:13px;color:#444;">34</div>
<div class="t" style="left:654px;width:600px;text-align:center;top:844.0px;font-size:13px;color:#444;">35</div>
<div class="t" style="left:654px;width:600px;text-align:center;top:864.0px;font-size:13px;color:#444;">36</div>
<div class="t" style="left:654px;width:600px;text-align:center;top:884.0px;font-size:13px;color:#444;">37</div>
<div class="t" style="left:654px;width:600px;text-align:center;top:904.0px;font-size:13px;color:#444;">38</div>
<div class="t" style="left:654px;width:600px;text-align:center;top:924.0px;font-size:13px;color:#444;">39</div>
<div class="t" style="left:654px;width:600px;text-align:center;top:944.0px;font-size:13px;color:#444;">40</div>
<div class="t" style="left:654px;width:600px;text-align:center;top:964.0px;font-size:13px;color:#444;">41</div>
<div class="t" style="left:970px;top:152px;font-size:16.4px;color:#262626;font-weight:bold;letter-spacing:-0.448px;">HAA INCENTIVE PAYMENTS</div>
<div class="t" style="left:970px;top:177px;font-size:16.4px;color:#262626;font-weight:bold;letter-spacing:-0.565px;">PAYROLL DATE:</div>
<div class="t" style="left:1098.75px;top:177px;font-size:16.4px;color:#262626;font-weight:bold;letter-spacing:1.35px;">3/27/2026</div>
<div class="t" style="left:780.5px;width:600px;text-align:center;top:223.8px;font-size:13.4px;color:#fff;font-weight:bold;letter-spacing:-0.907px;">EMPLOYEE NAME</div>
<div class="t" style="left:987px;width:600px;text-align:center;top:223.8px;font-size:13.4px;color:#fff;font-weight:bold;letter-spacing:-0.516px;">COMPANY</div>
<div class="t" style="left:1153.5px;width:600px;text-align:center;top:223.8px;font-size:13.4px;color:#fff;font-weight:bold;letter-spacing:-0.56px;">INCENTIVE TO BE PAID</div>
<div class="t" style="left:1291.5px;width:600px;text-align:center;top:223.8px;font-size:13.4px;color:#fff;font-weight:bold;letter-spacing:-0.438px;">INCENTIVE PERIOD</div>
<div class="t" style="left:1423.5px;width:600px;text-align:center;top:223.8px;font-size:13.4px;color:#fff;font-weight:bold;letter-spacing:-1.055px;">APPROVED BY</div>
<div class="t" style="left:969px;top:243.8px;font-size:14px;color:#1a1a1a;letter-spacing:-0.541px;">Bruce, Jeremy</div>
<div class="t" style="left:1197.5px;top:243.8px;font-size:14px;color:#1a1a1a;letter-spacing:-0.352px;">HAA Commercial</div>
<div class="t" style="left:1386px;top:243.8px;font-size:14px;color:#1a1a1a;">$</div>
<div class="t" style="right:400.5px;top:243.8px;font-size:14px;color:#1a1a1a;letter-spacing:-0.699px;">2,500.00</div>
<div class="t" style="left:1291.5px;width:600px;text-align:center;top:243.8px;font-size:14px;color:#1a1a1a;letter-spacing:-0.184px;">3/1/26</div>
<div class="t" style="left:1658px;top:243.8px;font-size:14px;color:#1a1a1a;letter-spacing:-0.165px;">B. Shooshanian</div>
<div class="t" style="left:969px;top:263.8px;font-size:14px;color:#1a1a1a;letter-spacing:0.009px;">Dulapa, Michael</div>
<div class="t" style="left:1197.5px;top:263.8px;font-size:14px;color:#1a1a1a;letter-spacing:-0.352px;">HAA Commercial</div>
<div class="t" style="left:1386px;top:263.8px;font-size:14px;color:#1a1a1a;">$</div>
<div class="t" style="right:400.5px;top:263.8px;font-size:14px;color:#1a1a1a;letter-spacing:-0.699px;">6,738.55</div>
<div class="t" style="left:1291.5px;width:600px;text-align:center;top:263.8px;font-size:14px;color:#1a1a1a;letter-spacing:-0.184px;">3/1/26</div>
<div class="t" style="left:1658px;top:263.8px;font-size:14px;color:#1a1a1a;letter-spacing:-0.165px;">B. Shooshanian</div>
<div class="t" style="left:969px;top:283.8px;font-size:14px;color:#1a1a1a;letter-spacing:-0.278px;">Ellis, Joseph</div>
<div class="t" style="left:1197.5px;top:283.8px;font-size:14px;color:#1a1a1a;letter-spacing:-0.352px;">HAA Commercial</div>
<div class="t" style="left:1386px;top:283.8px;font-size:14px;color:#1a1a1a;">$</div>
<div class="t" style="right:400.5px;top:283.8px;font-size:14px;color:#1a1a1a;letter-spacing:-0.699px;">2,500.00</div>
<div class="t" style="left:1291.5px;width:600px;text-align:center;top:283.8px;font-size:14px;color:#1a1a1a;letter-spacing:-0.184px;">3/1/26</div>
<div class="t" style="left:1658px;top:283.8px;font-size:14px;color:#1a1a1a;letter-spacing:-0.165px;">B. Shooshanian</div>
<div class="t" style="left:969px;top:303.8px;font-size:14px;color:#1a1a1a;letter-spacing:-0.441px;">Evans, Katie</div>
<div class="t" style="left:1197.5px;top:303.8px;font-size:14px;color:#1a1a1a;letter-spacing:-0.352px;">HAA Commercial</div>
<div class="t" style="left:1386px;top:303.8px;font-size:14px;color:#1a1a1a;">$</div>
<div class="t" style="right:400.5px;top:303.8px;font-size:14px;color:#1a1a1a;letter-spacing:-0.699px;">2,500.00</div>
<div class="t" style="left:1291.5px;width:600px;text-align:center;top:303.8px;font-size:14px;color:#1a1a1a;letter-spacing:-0.184px;">3/1/26</div>
<div class="t" style="left:1658px;top:303.8px;font-size:14px;color:#1a1a1a;letter-spacing:-0.165px;">B. Shooshanian</div>
<div class="t" style="left:969px;top:323.8px;font-size:14px;color:#1a1a1a;letter-spacing:-0.146px;">Jeffrey, Kimberly (Nikki)</div>
<div class="t" style="left:1197.5px;top:323.8px;font-size:14px;color:#1a1a1a;letter-spacing:-0.352px;">HAA Commercial</div>
<div class="t" style="left:1386px;top:323.8px;font-size:14px;color:#1a1a1a;">$</div>
<div class="t" style="right:400.5px;top:323.8px;font-size:14px;color:#1a1a1a;letter-spacing:-0.699px;">1,400.00</div>
<div class="t" style="left:1291.5px;width:600px;text-align:center;top:323.8px;font-size:14px;color:#1a1a1a;letter-spacing:-0.184px;">3/1/26</div>
<div class="t" style="left:1658px;top:323.8px;font-size:14px;color:#1a1a1a;letter-spacing:-0.165px;">B. Shooshanian</div>
<div class="t" style="left:969px;top:343.8px;font-size:14px;color:#1a1a1a;letter-spacing:-0.074px;">Morche', Tiffany</div>
<div class="t" style="left:1197.5px;top:343.8px;font-size:14px;color:#1a1a1a;letter-spacing:-0.352px;">HAA Commercial</div>
<div class="t" style="left:1386px;top:343.8px;font-size:14px;color:#1a1a1a;">$</div>
<div class="t" style="right:400.5px;top:343.8px;font-size:14px;color:#1a1a1a;letter-spacing:-0.699px;">1,100.00</div>
<div class="t" style="left:1291.5px;width:600px;text-align:center;top:343.8px;font-size:14px;color:#1a1a1a;letter-spacing:-0.184px;">3/1/26</div>
<div class="t" style="left:1658px;top:343.8px;font-size:14px;color:#1a1a1a;letter-spacing:-0.165px;">B. Shooshanian</div>
<div class="t" style="left:969px;top:363.8px;font-size:14px;color:#1a1a1a;letter-spacing:-0.497px;">Myers, Gregory</div>
<div class="t" style="left:1197.5px;top:363.8px;font-size:14px;color:#1a1a1a;letter-spacing:-0.352px;">HAA Commercial</div>
<div class="t" style="left:1386px;top:363.8px;font-size:14px;color:#1a1a1a;">$</div>
<div class="t" style="right:400.5px;top:363.8px;font-size:14px;color:#1a1a1a;letter-spacing:-0.699px;">1,100.00</div>
<div class="t" style="left:1291.5px;width:600px;text-align:center;top:363.8px;font-size:14px;color:#1a1a1a;letter-spacing:-0.184px;">3/1/26</div>
<div class="t" style="left:1658px;top:363.8px;font-size:14px;color:#1a1a1a;letter-spacing:-0.165px;">B. Shooshanian</div>
<div class="t" style="left:969px;top:383.8px;font-size:14px;color:#1a1a1a;letter-spacing:-0.069px;">Shooshanian, Barbara</div>
<div class="t" style="left:1197.5px;top:383.8px;font-size:14px;color:#1a1a1a;letter-spacing:-0.292px;">HAA Commercial &amp; Medicare</div>
<div class="t" style="left:1386px;top:383.8px;font-size:14px;color:#1a1a1a;">$</div>
<div class="t" style="right:400.5px;top:383.8px;font-size:14px;color:#1a1a1a;letter-spacing:-0.699px;">2,500.00</div>
<div class="t" style="left:1291.5px;width:600px;text-align:center;top:383.8px;font-size:14px;color:#1a1a1a;letter-spacing:-0.184px;">3/1/26</div>
<div class="t" style="left:1658px;top:383.8px;font-size:14px;color:#1a1a1a;letter-spacing:-0.413px;">Executive Leadership</div>
<div class="t" style="left:969px;top:423.8px;font-size:14px;color:#1a1a1a;letter-spacing:-0.324px;">Garrett, Kayti</div>
<div class="t" style="left:1197.5px;top:423.8px;font-size:14px;color:#1a1a1a;letter-spacing:-0.475px;">HAA Medicare</div>
<div class="t" style="left:1386px;top:423.8px;font-size:14px;color:#1a1a1a;">$</div>
<div class="t" style="right:400.5px;top:423.8px;font-size:14px;color:#1a1a1a;letter-spacing:-0.823px;">800.00</div>
<div class="t" style="left:1291.5px;width:600px;text-align:center;top:423.8px;font-size:14px;color:#1a1a1a;letter-spacing:-0.184px;">2/1/26</div>
<div class="t" style="left:1658px;top:423.8px;font-size:14px;color:#1a1a1a;letter-spacing:-0.165px;">B. Shooshanian</div>
<div class="t" style="left:969px;top:443.8px;font-size:14px;color:#1a1a1a;letter-spacing:-0.246px;">Taylor, Lacey</div>
<div class="t" style="left:1197.5px;top:443.8px;font-size:14px;color:#1a1a1a;letter-spacing:-0.475px;">HAA Medicare</div>
<div class="t" style="left:1386px;top:443.8px;font-size:14px;color:#1a1a1a;">$</div>
<div class="t" style="right:400.5px;top:443.8px;font-size:14px;color:#1a1a1a;letter-spacing:-0.823px;">600.00</div>
<div class="t" style="left:1291.5px;width:600px;text-align:center;top:443.8px;font-size:14px;color:#1a1a1a;letter-spacing:-0.184px;">2/1/26</div>
<div class="t" style="left:1658px;top:443.8px;font-size:14px;color:#1a1a1a;letter-spacing:-0.165px;">B. Shooshanian</div>
<div class="t" style="left:969px;top:463.8px;font-size:14px;color:#1a1a1a;letter-spacing:-0.218px;">Wehrmann, Deanne</div>
<div class="t" style="left:1197.5px;top:463.8px;font-size:14px;color:#1a1a1a;letter-spacing:-0.475px;">HAA Medicare</div>
<div class="t" style="left:1386px;top:463.8px;font-size:14px;color:#1a1a1a;">$</div>
<div class="t" style="right:400.5px;top:463.8px;font-size:14px;color:#1a1a1a;letter-spacing:-0.699px;">1,600.00</div>
<div class="t" style="left:1291.5px;width:600px;text-align:center;top:463.8px;font-size:14px;color:#1a1a1a;letter-spacing:-0.184px;">2/1/26</div>
<div class="t" style="left:1658px;top:463.8px;font-size:14px;color:#1a1a1a;letter-spacing:-0.165px;">B. Shooshanian</div>
<div class="a" style="left:1193px;top:581.0px;width:188px;height:22.5px;border:2px solid #1e6b3a"></div>
<div class="a" style="left:1376px;top:599.0px;width:7px;height:7px;background:#1e6b3a;border:1px solid #fff"></div>
<div class="a" style="left:965px;top:582.5px;width:2px;height:20px;background:#1e6b3a"></div>
<div class="a" style="left:941px;top:976px;width:979px;height:32px;background:#efefef"></div>
<div class="a" style="left:1901px;top:128px;width:17px;height:850px;background:#f7f7f7;border-radius:8px"></div>
<svg style="left:1905px;top:133px" width="9" height="7" viewBox="0 0 9 7"><path d="M4.5 0L9 7H0Z" fill="#6f6f6f"/></svg>
<svg style="left:1905px;top:967px" width="9" height="7" viewBox="0 0 9 7"><path d="M4.5 7L9 0H0Z" fill="#6f6f6f"/></svg>
<div class="a" style="left:1905px;top:145px;width:9px;height:809px;background:#717171;border-radius:4.5px"></div>
<svg style="left:969px;top:987px" width="8" height="10" viewBox="0 0 8 10"><path d="M7 0.5L2 5L7 9.5" stroke="#999" stroke-width="1.1" fill="none"/></svg>
<svg style="left:1001px;top:987px" width="8" height="10" viewBox="0 0 8 10"><path d="M1 0.5L6 5L1 9.5" stroke="#333" stroke-width="1.1" fill="none"/></svg>
<div class="t" style="left:1065px;top:982.7px;font-size:13.5px;color:#262626;letter-spacing:-0.021px;">PAYDATE 1-16-26</div>
<div class="a" style="left:1188px;top:983px;width:1px;height:17px;background:#d0d0d0"></div>
<div class="t" style="left:1202px;top:982.7px;font-size:13.5px;color:#262626;letter-spacing:-0.021px;">PAYDATE 2-27-26</div>
<div class="a" style="left:1326px;top:983px;width:1px;height:17px;background:#d0d0d0"></div>
<div class="a" style="left:1330px;top:976px;width:140px;height:28px;background:#fff;border:1px solid #e0e0e0;border-top:none;border-radius:0 0 6px 6px"></div>
<div class="a" style="left:1330px;top:976px;width:1px;height:6px;background:#fff"></div>
<div class="t" style="left:1339.5px;top:980.2px;font-size:14px;color:#111;letter-spacing:-0.17px;-webkit-text-stroke:0.25px #111;">PAYDATE 3-27-26</div>
<div class="a" style="left:1339px;top:999px;width:120px;height:2px;background:#0e7a3a"></div>
<div class="a" style="left:1451px;top:976px;width:469px;height:32px;background:#efefef"></div>
<div class="a" style="left:1461px;top:990px;width:2.5px;height:2.5px;border-radius:50%;background:#222"></div>
<div class="a" style="left:1465.5px;top:990px;width:2.5px;height:2.5px;border-radius:50%;background:#222"></div>
<div class="a" style="left:1470px;top:990px;width:2.5px;height:2.5px;border-radius:50%;background:#222"></div>
<svg style="left:1493px;top:986px" width="11" height="11" viewBox="0 0 11 11"><path d="M5.5 0V11M0 5.5H11" stroke="#999" stroke-width="1.1"/></svg>
<div class="a" style="left:1530px;top:988px;width:2.5px;height:2.5px;border-radius:50%;background:#222"></div>
<div class="a" style="left:1530px;top:992.5px;width:2.5px;height:2.5px;border-radius:50%;background:#222"></div>
<div class="a" style="left:1530px;top:997px;width:2.5px;height:2.5px;border-radius:50%;background:#222"></div>
<div class="a" style="left:1547px;top:983px;width:354px;height:17px;background:#f7f7f7;border-radius:8px"></div>
<svg style="left:1552px;top:987px" width="7" height="9" viewBox="0 0 7 9"><path d="M0 4.5L7 0V9Z" fill="#6f6f6f"/></svg>
<svg style="left:1889px;top:987px" width="7" height="9" viewBox="0 0 7 9"><path d="M7 4.5L0 0V9Z" fill="#6f6f6f"/></svg>
<div class="a" style="left:1564px;top:987px;width:272px;height:9px;background:#717171;border-radius:4.5px"></div>
<div class="a" style="left:0;top:1008px;width:1920px;height:24px;background:#fff"></div>
<div class="t" style="left:14px;top:1009.7px;font-size:12px;color:#1a1a1a;letter-spacing:-0.113px;">4 items</div>
<div class="a" style="left:62px;top:1014px;width:1px;height:12px;background:#e5e5e5"></div>
<div class="t" style="left:73px;top:1009.7px;font-size:12px;color:#1a1a1a;letter-spacing:-0.318px;">1 item selected  19.5 KB</div>
<div class="a" style="left:206px;top:1014px;width:1px;height:12px;background:#e5e5e5"></div>
<div class="t" style="left:217px;top:1009.7px;font-size:12px;color:#1a1a1a;letter-spacing:-0.051px;">Available on this device</div>
<div class="a" style="left:351px;top:1014px;width:1px;height:12px;background:#e5e5e5"></div>
<div class="a" style="left:1868px;top:1008px;width:24px;height:24px;background:#e5f3ff;border:1px solid #1a73d9"></div>
<svg style="left:1875px;top:1015px" width="11" height="10" viewBox="0 0 11 10"><path d="M0 0.5H11M0 3.5H11M0 6.5H11M0 9.5H11" stroke="#333" stroke-width="0.9"/></svg>
<svg style="left:1898px;top:1014px" width="13" height="13" viewBox="0 0 13 13"><rect x="0.5" y="0.5" width="12" height="9" fill="none" stroke="#333" stroke-width="1"/><path d="M0 12H13" stroke="#333" stroke-width="1"/></svg>
<div class="a" style="left:0;top:1032px;width:1920px;height:48px;background:#eeeeee;border-top:1px solid #d6d6d6"></div>
<svg style="left:18px;top:1045px" width="26" height="22" viewBox="0 0 26 22"><defs><linearGradient id="wc" x1="0" y1="0" x2="0" y2="1"><stop offset="0" stop-color="#c9e3fb"/><stop offset="1" stop-color="#8ebff0"/></linearGradient></defs><path d="M5 21H20A4 4 0 0 0 20.5 13A6.5 6.5 0 0 0 8 11.5A4.8 4.8 0 0 0 5 21Z" fill="url(#wc)"/></svg>
<div class="a" style="left:30px;top:1038px;width:16px;height:16px;border-radius:50%;background:#c42b1c;color:#fff;font-size:11px;line-height:16px;text-align:center">1</div>
<div class="t" style="left:50px;top:1038.4px;font-size:12px;color:#1a1a1a;">36°F</div>
<div class="t" style="left:50px;top:1054.2px;font-size:12px;color:#5f5f5f;letter-spacing:0.193px;">Mostly cloudy</div>
<svg style="left:551px;top:1045px" width="23" height="23" viewBox="0 0 23 23"><defs><linearGradient id="win" x1="0" y1="0" x2="1" y2="1"><stop offset="0" stop-color="#52d0fb"/><stop offset="1" stop-color="#0a64cf"/></linearGradient></defs><path d="M0 1Q0 0 1 0H11V11H0ZM12 0H22Q23 0 23 1V11H12ZM0 12H11V23H1Q0 23 0 22ZM12 12H23V22Q23 23 22 23H12Z" fill="url(#win)"/></svg>
<div class="a" style="left:588px;top:1040px;width:218px;height:31px;border-radius:16px;background:#fafafa;border:1px solid #dedede"></div>
<svg style="left:599px;top:1049px" width="15" height="15" viewBox="0 0 15 15"><circle cx="6" cy="6" r="5" fill="#f2f2f2" stroke="#1a1a1a" stroke-width="1.6"/><path d="M9.8 9.8L14 14" stroke="#1a1a1a" stroke-width="1.8"/></svg>
<div class="t" style="left:624px;top:1046.3px;font-size:14px;color:#5f5f5f;letter-spacing:-0.671px;">Search</div>
<svg style="left:818px;top:1044px" width="25" height="23" viewBox="0 0 25 23"><defs><linearGradient id="tv1" x1="0" y1="0" x2="1" y2="1"><stop offset="0" stop-color="#fff"/><stop offset="1" stop-color="#d6d6d6"/></linearGradient></defs><rect x="6" y="0" width="18" height="15" rx="1" fill="url(#tv1)"/><rect x="0" y="7" width="18" height="16" rx="1" fill="#1f1f1f"/><rect x="6" y="7" width="12" height="9" fill="#b9b9b9"/></svg>
<div class="a" style="left:856px;top:1037px;width:38px;height:38px;border-radius:5px;background:#f8f8f8;border:1px solid #e3e3e3"></div>
<svg style="left:863px;top:1045px" width="24" height="21" viewBox="0 0 24 21"><path d="M0 2Q0 0.5 1.5 0.5H8L10 2.5H22.5Q24 2.5 24 4V6H0Z" fill="#e4a60d"/><path d="M0 4H24V19.5Q24 21 22.5 21H1.5Q0 21 0 19.5Z" fill="#fcd15a"/><path d="M4.5 16.5Q4.5 14.5 6.5 14.5H17.5Q19.5 14.5 19.5 16.5V21H4.5Z" fill="#1877d6"/><path d="M8 17.5H16" stroke="#1160b8" stroke-width="1"/></svg>
<div class="a" style="left:867px;top:1072px;width:16px;height:3px;border-radius:1.5px;background:#1a73d9"></div>
<svg style="left:907px;top:1043px" width="25" height="26" viewBox="0 0 25 26"><defs><linearGradient id="eg" x1="0" y1="0.2" x2="1" y2="0.6"><stop offset="0" stop-color="#1a8fe3"/><stop offset="0.5" stop-color="#2cc3c0"/><stop offset="1" stop-color="#6ce35c"/></linearGradient><linearGradient id="eb" x1="0" y1="0" x2="1" y2="1"><stop offset="0" stop-color="#0f7be0"/><stop offset="1" stop-color="#114a9e"/></linearGradient></defs><path d="M0.5 13A12 12 0 0 1 24.5 12Q24.8 17 20.5 17.5H15A4 4 0 0 1 13.5 10Q10 6.5 5 8.5Q1.5 10.5 0.5 15Z" fill="url(#eg)"/><path d="M0.5 14Q2 7.5 8.5 7.5Q12.5 7.5 14 10.5A3.8 3.8 0 0 0 15.5 17.3H21Q23.5 17 24 15Q22.5 23 15 25Q6 26.5 2.5 20Q0.3 17 0.5 14Z" fill="url(#eb)"/><circle cx="16.5" cy="12.3" r="2.6" fill="#f4f4f4"/><rect x="0.5" y="16.5" width="12" height="8.5" rx="0.8" fill="#b86a12"/><rect x="0.5" y="16.5" width="12" height="3.5" fill="#e39a23"/><rect x="5.5" y="18.8" width="2" height="2" fill="#f7d348"/><path d="M4.5 16.5V15.3Q4.5 14.5 5.3 14.5H7.7Q8.5 14.5 8.5 15.3V16.5" fill="none" stroke="#3a3a3a" stroke-width="0.9"/></svg>
<div class="a" style="left:916px;top:1072px;width:6px;height:3px;border-radius:1.5px;background:#777"></div>
<div class="a" style="left:943px;top:1036px;width:40px;height:40px;border-radius:5px;background:#e9b3af"></div>
<svg style="left:951px;top:1044px" width="25" height="25" viewBox="0 0 25 25"><circle cx="9.5" cy="3.5" r="3.3" fill="#8c8ef0"/><rect x="9" y="8" width="13" height="15" rx="4" fill="#7b83eb"/><rect x="6" y="9" width="13" height="14" rx="4" fill="#5b5fc7"/><rect x="0" y="12" width="11" height="11" rx="1.5" fill="#4b53bc"/><path d="M2.8 14.5H8.2M5.5 14.5V21" stroke="#fff" stroke-width="1.6"/></svg>
<div class="a" style="left:964px;top:1039px;width:16px;height:16px;border-radius:50%;background:#c42b1c;color:#fff;font-size:11px;line-height:16px;text-align:center">1</div>
<div class="a" style="left:947px;top:1072px;width:32px;height:3px;border-radius:1.5px;background:#c42b1c"></div>
<svg style="left:995px;top:1044px" width="24" height="24" viewBox="0 0 24 24"><defs><linearGradient id="rd" x1="0" y1="0" x2="1" y2="1"><stop offset="0" stop-color="#0b2fb0"/><stop offset="1" stop-color="#a9c8ff"/></linearGradient></defs><path d="M1 2L19 0V15L2 13Z" fill="#c0c0c0"/><path d="M2 3L18 1.5V13.5L3 12Z" fill="url(#rd)"/><ellipse cx="10" cy="19" rx="7" ry="3" fill="#d8d8d8"/><circle cx="17.5" cy="17.5" r="5.5" fill="#e6e6e6" stroke="#888" stroke-width="0.8"/><path d="M15 18L17 16M20 17L18 19" stroke="#2a9d4a" stroke-width="1.3"/></svg>
<svg style="left:1039px;top:1044px" width="24" height="24" viewBox="0 0 24 24"><circle cx="12" cy="12" r="11" fill="none" stroke="#0b5cc4" stroke-width="1.8"/><path d="M18 8A7 7 0 1 0 18 16" fill="none" stroke="#0b5cc4" stroke-width="2.6"/><circle cx="12" cy="12" r="3" fill="#0b5cc4"/><path d="M12 12H24" stroke="#0b5cc4" stroke-width="1.6"/></svg>
<svg style="left:1083px;top:1044px" width="24" height="24" viewBox="0 0 24 24"><path d="M12 12L1.6 6A12 12 0 0 1 22.4 6Z" fill="#ea4335"/><path d="M12 12L22.4 6A12 12 0 0 1 12 24Z" fill="#fbbc04"/><path d="M12 12L12 24A12 12 0 0 1 1.6 6Z" fill="#34a853"/><circle cx="12" cy="12" r="5.4" fill="#fff"/><circle cx="12" cy="12" r="4.3" fill="#4285f4"/></svg>
<svg style="left:1127px;top:1045px" width="24" height="22" viewBox="0 0 24 22"><defs><linearGradient id="ol" x1="0" y1="0" x2="1" y2="1"><stop offset="0" stop-color="#1f8fe0"/><stop offset="1" stop-color="#40d1ff"/></linearGradient></defs><path d="M2 8L13 1L23 7V20Q23 22 21 22H4Q2 22 2 20Z" fill="url(#ol)"/><path d="M6 9L15 3L23 7L14 12Z" fill="#1664cc"/><rect x="0" y="12" width="10" height="9" rx="1.5" fill="#0f5fc4"/><circle cx="5" cy="16.5" r="2.5" fill="none" stroke="#fff" stroke-width="1.4"/></svg>
<svg style="left:1170px;top:1045px" width="22" height="22" viewBox="0 0 22 22"><defs><linearGradient id="on" x1="0" y1="0" x2="1" y2="1"><stop offset="0" stop-color="#e46df2"/><stop offset="1" stop-color="#8b2ab8"/></linearGradient></defs><rect x="4" y="0" width="18" height="22" rx="2" fill="url(#on)"/><path d="M14 8H22V22H14Z" fill="#a43fcb"/><rect x="0" y="9" width="11" height="11" rx="1.5" fill="#7719aa"/><path d="M2.8 18V11.5L8 18V11.5" fill="none" stroke="#fff" stroke-width="1.5"/></svg>
<svg style="left:1217px;top:1046px" width="20" height="20" viewBox="0 0 20 20"><rect x="0" y="0" width="20" height="20" rx="4" fill="#3b138f"/><circle cx="10" cy="10" r="4.5" fill="none" stroke="#fff" stroke-width="2.4"/><path d="M12 12L15 16" stroke="#e8d0ff" stroke-width="2"/><circle cx="4" cy="4" r="0.8" fill="#fff"/><circle cx="16" cy="4.5" r="0.8" fill="#fff"/></svg>
<svg style="left:1259px;top:1045px" width="22" height="22" viewBox="0 0 22 22"><defs><linearGradient id="xl" x1="0" y1="0" x2="0" y2="1"><stop offset="0" stop-color="#73dd5d"/><stop offset="1" stop-color="#0b6a2e"/></linearGradient></defs><path d="M5 2Q5 0 7 0H19Q21 0 21 2V20Q21 22 19 22H8Q5 22 5 19Z" fill="url(#xl)"/><rect x="0" y="10" width="10" height="10" rx="2" fill="#107c41"/><path d="M2.8 12.5L7.2 17.5M7.2 12.5L2.8 17.5" stroke="#fff" stroke-width="1.5"/></svg>
<svg style="left:1306px;top:1044px" width="18" height="24" viewBox="0 0 18 24"><rect x="0" y="0" width="18" height="24" rx="1.5" fill="#6e7a86"/><rect x="2" y="2" width="14" height="4" fill="#45c6ee"/><g fill="#d7dde3"><rect x="2" y="8" width="3.5" height="3.5"/><rect x="7" y="8" width="3.5" height="3.5"/><rect x="12" y="8" width="3.5" height="3.5"/><rect x="2" y="13" width="3.5" height="3.5"/><rect x="7" y="13" width="3.5" height="3.5"/><rect x="2" y="18" width="3.5" height="3.5"/><rect x="7" y="18" width="3.5" height="3.5"/></g><rect x="12" y="13" width="3.5" height="8.5" fill="#1d4f91"/></svg>
<svg style="left:1348px;top:1045px" width="22" height="22" viewBox="0 0 22 22"><rect x="0" y="0" width="22" height="21" rx="4" fill="#b30b00"/><path d="M5 17Q8 14 10 7Q10.5 4 11 5Q12 7 12 10Q14 13 18 14Q16 13.5 11 14Q8 15 5 17Z" fill="none" stroke="#fff" stroke-width="1.3"/></svg>
<div class="a" style="left:1092px;top:1072px;width:6px;height:3px;border-radius:1.5px;background:#777"></div>
<div class="a" style="left:1136px;top:1072px;width:6px;height:3px;border-radius:1.5px;background:#777"></div>
<div class="a" style="left:1180px;top:1072px;width:6px;height:3px;border-radius:1.5px;background:#777"></div>
<div class="a" style="left:1224px;top:1072px;width:6px;height:3px;border-radius:1.5px;background:#777"></div>
<div class="a" style="left:1268px;top:1072px;width:6px;height:3px;border-radius:1.5px;background:#777"></div>
<div class="a" style="left:1312px;top:1072px;width:6px;height:3px;border-radius:1.5px;background:#777"></div>
<div class="a" style="left:1356px;top:1072px;width:6px;height:3px;border-radius:1.5px;background:#777"></div>
<svg style="left:1700px;top:1052px" width="11" height="7" viewBox="0 0 11 7"><path d="M0.8 6.2L5.5 1.2L10.2 6.2" stroke="#222" stroke-width="1.3" fill="none"/></svg>
<svg style="left:1731px;top:1048px" width="13" height="17" viewBox="0 0 13 17"><rect x="3.8" y="0.8" width="5.4" height="10" rx="2.7" fill="none" stroke="#2a5fc4" stroke-width="1.3"/><path d="M0.8 7.5A5.7 5.7 0 0 0 12.2 7.5M6.5 13.2V16.5" fill="none" stroke="#2a5fc4" stroke-width="1.3"/></svg>
<svg style="left:1761px;top:1049px" width="17" height="13" viewBox="0 0 17 13"><path d="M0.7 4.3A11 11 0 0 1 16.3 4.3M3 6.8A7.5 7.5 0 0 1 14 6.8M5.3 9.2A4.3 4.3 0 0 1 11.7 9.2" fill="none" stroke="#1a1a1a" stroke-width="1.2"/><circle cx="8.5" cy="11.5" r="1.2" fill="#1a1a1a"/></svg>
<svg style="left:1785px;top:1049px" width="17" height="15" viewBox="0 0 17 15"><path d="M0.6 5H3.5L7.5 1.2V13.8L3.5 10H0.6Z" fill="none" stroke="#1a1a1a" stroke-width="1.1" stroke-linejoin="round"/><path d="M10 4.5A4 4 0 0 1 10 10.5M12.3 2.5A7 7 0 0 1 12.3 12.5M14.5 0.8A9.5 9.5 0 0 1 14.5 14.2" fill="none" stroke="#1a1a1a" stroke-width="1.1"/></svg>
<svg style="left:1809px;top:1048px" width="21" height="14" viewBox="0 0 21 14"><rect x="0.7" y="3.7" width="17.6" height="9.6" rx="2" fill="#107c10" stroke="#1a1a1a" stroke-width="1.2"/><rect x="18.5" y="6.5" width="2" height="4" rx="0.8" fill="#1a1a1a"/><path d="M10.5 0L7.5 7H10L8.5 11L12.5 5H10Z" fill="#1a1a1a"/><path d="M10.5 0.8L8.5 6H10.5" stroke="#fff" stroke-width="0.5" fill="none"/></svg>
<div class="t" style="right:19px;top:1039px;font-size:12px;color:#1a1a1a;letter-spacing:0.028px;">11:46 AM</div>
<div class="t" style="right:19px;top:1055px;font-size:12px;color:#1a1a1a;letter-spacing:0.153px;">3/24/2026</div>
</body></html>
